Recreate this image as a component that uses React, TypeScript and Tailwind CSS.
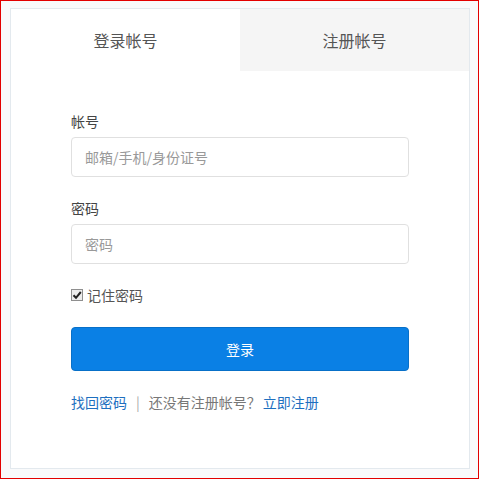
import { useState } from 'react';

export default function App() {
  const [tab, setTab] = useState<'login' | 'register'>('login');
  const [remember, setRemember] = useState(true);

  return (
    <div
      className="w-[479px] h-[479px] border border-[#e30000] bg-[#f9fafb] pl-[9px] pt-[7px]"
      style={{ fontFamily: '"Noto Sans CJK SC", "Noto Sans", sans-serif' }}
    >
      <div className="w-[460px] h-[461px] border border-[#e3e9ee] bg-white">
        <div className="flex h-[62px]">
          <button
            onClick={() => setTab('login')}
            className={`flex-1 text-[16px] text-[#555] ${tab === 'login' ? 'bg-white' : 'bg-[#f5f5f5]'}`}
          >
            登录帐号
          </button>
          <button
            onClick={() => setTab('register')}
            className={`flex-1 text-[16px] text-[#555] ${tab === 'register' ? 'bg-white' : 'bg-[#f5f5f5]'}`}
          >
            注册帐号
          </button>
        </div>

        <div className="px-[60px] pt-[40px] text-[14px]">
          <div className="leading-[20px] text-[#444] mb-[6px]">帐号</div>
          <input
            className="w-full h-[40px] px-[13px] border border-[#e0e0e0] rounded-[4px] outline-none placeholder:text-[#999] text-[14px]"
            placeholder="邮箱/手机/身份证号"
          />

          <div className="leading-[20px] text-[#444] mt-[21px] mb-[6px]">密码</div>
          <input
            type="password"
            className="w-full h-[40px] px-[13px] border border-[#e0e0e0] rounded-[4px] outline-none placeholder:text-[#999] text-[14px]"
            placeholder="密码"
          />

          <label className="mt-[21px] flex items-center h-[20px] text-[#555] cursor-pointer">
            <span
              onClick={() => setRemember(!remember)}
              className="w-[12px] h-[12px] border border-[#8f8f8f] bg-[#ececec] flex items-center justify-center mr-[4px]"
            >
              {remember && (
                <svg width="10" height="10" viewBox="0 0 10 10">
                  <path d="M1.5 5.2 L4 7.8 L8.8 2" stroke="#222" strokeWidth="2" fill="none" />
                </svg>
              )}
            </span>
            记住密码
          </label>

          <button className="mt-[22px] w-full h-[44px] rounded-[4px] bg-[#0a80e5] border border-[#0870c8] text-white text-[14px]">
            登录
          </button>

          <div className="mt-[21px] flex items-center h-[20px] text-[#777]">
            <a className="text-[#1e6fbf] cursor-pointer">找回密码</a>
            <span className="mx-[9px] text-[#aaa]">|</span>
            <span>还没有注册帐号？</span>
            <a className="ml-[2px] text-[#1e6fbf] cursor-pointer">立即注册</a>
          </div>
        </div>
      </div>
    </div>
  );
}
